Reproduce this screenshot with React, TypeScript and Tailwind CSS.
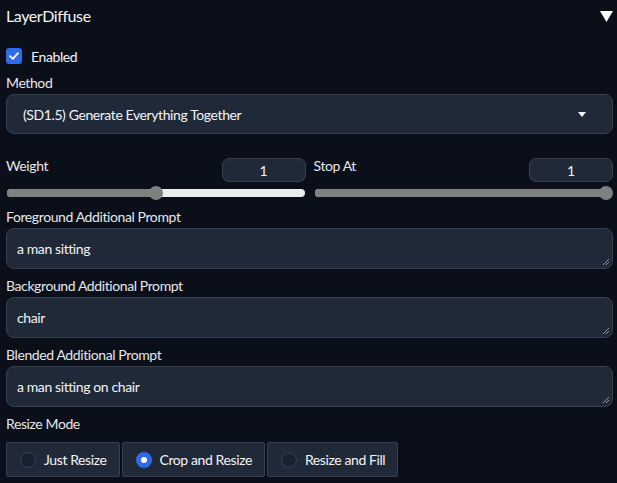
import React from "react";

const font = { fontFamily: "Lato, 'Noto Sans', sans-serif" };

function Label({ children }: { children: React.ReactNode }) {
  return <div className="h-[20px] leading-[20px] text-[14px] tracking-[-0.4px] text-[#e5e7eb]">{children}</div>;
}

function ResizeHandle() {
  return (
    <svg className="absolute right-[3px] bottom-[3px]" width="7" height="7" viewBox="0 0 7 7">
      <line x1="1" y1="7" x2="7" y2="1" stroke="#9ca3af" strokeWidth="0.9" />
      <line x1="4" y1="7" x2="7" y2="4" stroke="#9ca3af" strokeWidth="0.9" />
    </svg>
  );
}

function PromptBox({ label, value }: { label: string; value: string }) {
  return (
    <div className="flex flex-col">
      <Label>{label}</Label>
      <div className="relative mt-[1px] h-[41px] rounded-[8px] border border-[#374151] bg-[#1f2937] pl-[10px] flex items-center text-[14px] tracking-[-0.4px] text-[#f3f4f6]">
        {value}
        <ResizeHandle />
      </div>
    </div>
  );
}

function Slider({ label, pct }: { label: string; pct: number }) {
  return (
    <div className="flex-1 flex flex-col">
      <div className="flex items-start justify-between h-[26px]">
        <div className="text-[14px] tracking-[-0.4px] text-[#e5e7eb] leading-[20px]">{label}</div>
        <div className="mt-[2px] w-[84px] h-[24px] rounded-[7px] border border-[#374151] bg-[#1f2937] flex items-center justify-center text-[14px] text-[#f3f4f6]">
          1
        </div>
      </div>
      <div className="relative mt-[4px] h-[14px] flex items-center px-[1px]">
        <div className="relative w-full h-[8px] rounded-full bg-[#ececec] overflow-hidden">
          <div className="absolute left-0 top-0 h-full bg-[#808080]" style={{ width: `${pct}%` }} />
        </div>
        <div
          className="absolute top-0 w-[14px] h-[14px] rounded-full bg-[#808080]"
          style={{ left: `calc(${pct}% - 7px)` }}
        />
      </div>
    </div>
  );
}

function Radio({ label, checked }: { label: string; checked?: boolean }) {
  return (
    <div className="h-[35px] flex items-center pl-[13px] pr-[12px] gap-[8px] border border-[#374151] bg-[#1f2937] rounded-[2px] text-[14px] tracking-[-0.4px] text-[#f3f4f6]">
      {checked ? (
        <div className="w-[16px] h-[16px] rounded-full bg-[#2f6ae8] flex items-center justify-center">
          <div className="w-[6px] h-[6px] rounded-full bg-white" />
        </div>
      ) : (
        <div className="w-[16px] h-[16px] rounded-full border border-[#374151] bg-[#1a2230]" />
      )}
      <span>{label}</span>
    </div>
  );
}

export default function App() {
  return (
    <div className="w-[617px] h-[483px] overflow-hidden bg-[#0b0f19] pl-[6px] pr-[4px] flex flex-col" style={font}>
      <div className="h-[32px] flex items-center justify-between">
        <div className="text-[16px] tracking-[-0.4px] text-[#f3f4f6]">LayerDiffuse</div>
        <svg width="13" height="11" viewBox="0 0 13 11" className="mr-[0px]">
          <polygon points="0,0 13,0 6.5,11" fill="#ffffff" />
        </svg>
      </div>
      <div className="mt-[16px] h-[16px] flex items-center gap-[9px]">
        <div className="w-[16px] h-[16px] rounded-[3px] bg-[#2f6ae8] flex items-center justify-center">
          <svg width="10" height="8" viewBox="0 0 10 8">
            <path d="M1 4.2 L3.8 6.8 L9 1.2" stroke="white" strokeWidth="1.8" fill="none" strokeLinecap="round" strokeLinejoin="round" />
          </svg>
        </div>
        <span className="text-[14px] tracking-[-0.4px] text-[#f3f4f6]">Enabled</span>
      </div>
      <div className="mt-[9px]">
        <Label>Method</Label>
      </div>
      <div className="mt-[1px] h-[40px] rounded-[8px] border border-[#374151] bg-[#1f2937] flex items-center justify-between pl-[16px] pr-[26px] text-[14px] tracking-[-0.4px] text-[#f3f4f6]">
        <span>(SD1.5) Generate Everything Together</span>
        <svg width="8" height="5" viewBox="0 0 8 5">
          <polygon points="0,0 8,0 4,5" fill="#f3f4f6" />
        </svg>
      </div>
      <div className="mt-[22px] flex gap-[8px]">
        <Slider label="Weight" pct={50} />
        <Slider label="Stop At" pct={97.5} />
      </div>
      <div className="mt-[7px] flex flex-col gap-[7px]">
        <PromptBox label="Foreground Additional Prompt" value="a man sitting" />
        <PromptBox label="Background Additional Prompt" value="chair" />
        <PromptBox label="Blended Additional Prompt" value="a man sitting on chair" />
      </div>
      <div className="mt-[7px]">
        <Label>Resize Mode</Label>
      </div>
      <div className="mt-[8px] flex gap-[2px]">
        <Radio label="Just Resize" />
        <Radio label="Crop and Resize" checked />
        <Radio label="Resize and Fill" />
      </div>
    </div>
  );
}
